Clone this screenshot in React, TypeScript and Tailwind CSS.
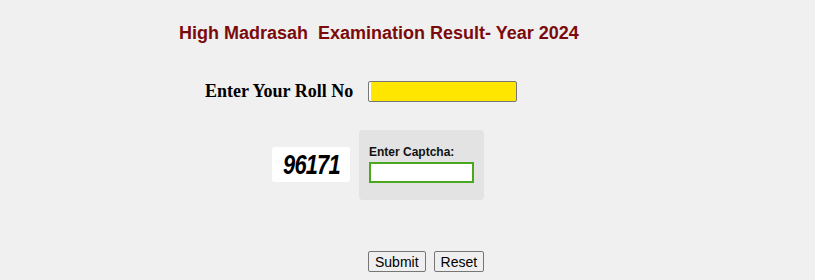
import React from "react";

export default function App() {
  return (
    <div className="w-full h-[280px] bg-[#f0f0f0] overflow-hidden font-['Liberation_Sans',Arial,sans-serif]">
      <div className="pt-[23px] pl-[179px] h-[80px]">
        <h1 className="text-[18px] leading-[21px] font-bold text-[#7b0a0a] whitespace-pre">
          High Madrasah  Examination Result- Year 2024
        </h1>
      </div>
      <div className="flex items-center h-[22px] mt-[0px]">
        <label className="ml-[205px] w-[163px] font-['Liberation_Serif','Times_New_Roman',serif] font-bold text-[18px] text-black leading-[22px]">
          Enter Your Roll No
        </label>
        <input
          type="text"
          className="w-[149px] h-[21px] bg-[#ffe600] border border-[#767676] rounded-[2px] shadow-[inset_2px_0_0_#ffffff] outline-none px-1 text-[13px]"
        />
      </div>
      <div className="flex items-start mt-[28px]">
        <div className="ml-[272px] mt-[17px] w-[78px] h-[35px] bg-white rounded-[3px] flex items-center justify-center">
          <span className="font-['Liberation_Sans',Arial,sans-serif] font-bold italic text-[28px] leading-none text-black tracking-[-1px] scale-x-[0.78] inline-block">
            96171
          </span>
        </div>
        <div className="ml-[9px] w-[125px] h-[70px] bg-[#e3e3e3] rounded-[4px] pl-[10px] pt-[15px]">
          <div className="text-[12px] font-bold leading-[14px] text-[#111]">Enter Captcha:</div>
          <input
            type="text"
            className="mt-[3px] w-[105px] h-[21px] bg-white border-2 border-[#4aa81e] outline-none px-1 text-[13px]"
          />
        </div>
      </div>
      <div className="flex ml-[368px] mt-[51px] gap-[8px]">
        <button className="h-[21px] px-[6px] text-[14px] leading-[16px] bg-[#efefef] border border-[#767676] rounded-[2px] text-black">
          Submit
        </button>
        <button className="h-[21px] px-[6px] text-[14px] leading-[16px] bg-[#efefef] border border-[#767676] rounded-[2px] text-black">
          Reset
        </button>
      </div>
    </div>
  );
}
